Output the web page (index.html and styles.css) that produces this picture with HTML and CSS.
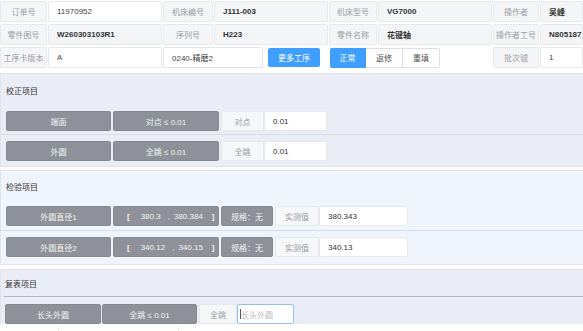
FILE: index.html
```html
<!DOCTYPE html>
<html lang="zh">
<head>
<meta charset="utf-8">
<title>工序</title>
<link rel="stylesheet" href="styles.css">
</head>
<body>
<div class="page">
  <div class="info">
    <div class="lbl">订单号</div>
    <div class="val val-input">11970952</div>
    <div class="lbl">机床编号</div>
    <div class="val val-bold">J111-003</div>
    <div class="lbl">机床型号</div>
    <div class="val val-bold">VG7000</div>
    <div class="lbl">操作者</div>
    <div class="val val-bold">吴峰</div>

    <div class="lbl">零件图号</div>
    <div class="val val-bold">W260303103R1</div>
    <div class="lbl">序列号</div>
    <div class="val val-bold">H223</div>
    <div class="lbl">零件名称</div>
    <div class="val val-bold">花键轴</div>
    <div class="lbl">操作者工号</div>
    <div class="val val-bold">N805187</div>

    <div class="lbl">工序卡版本</div>
    <div class="val val-input">A</div>
    <div class="ops">
      <div class="op-input">0240-精磨2</div>
      <div class="btn-primary">更多工序</div>
    </div>
    <div class="btn-group">
      <div class="bg-item bg-active">正常</div>
      <div class="bg-item">返修</div>
      <div class="bg-item">重填</div>
    </div>
    <div class="lbl">批次號</div>
    <div class="val val-input">1</div>
  </div>

  <section class="sec sec-a">
    <div class="sec-title">校正项目</div>
    <div class="row">
      <div class="cell dark w-name">端面</div>
      <div class="cell dark w-spec">对点 ≤ 0.01</div>
      <div class="cell light w-lbl">对点</div>
      <div class="cell value w-val">0.01</div>
    </div>
    <div class="row row-last">
      <div class="cell dark w-name">外圆</div>
      <div class="cell dark w-spec">全跳 ≤ 0.01</div>
      <div class="cell light w-lbl">全跳</div>
      <div class="cell value w-val">0.01</div>
    </div>
  </section>

  <section class="sec sec-b">
    <div class="sec-title">检验项目</div>
    <div class="row">
      <div class="cell dark w-name">外圆直径1</div>
      <div class="cell dark w-spec range"><span>[</span><span>380.3</span><span>,</span><span>380.384</span><span>]</span></div>
      <div class="cell dark w-rule">规格：无</div>
      <div class="cell light w-lbl2">实测值</div>
      <div class="cell value w-val2">380.343</div>
    </div>
    <div class="row row-last">
      <div class="cell dark w-name">外圆直径2</div>
      <div class="cell dark w-spec range"><span>[</span><span>340.12</span><span>,</span><span>340.15</span><span>]</span></div>
      <div class="cell dark w-rule">规格：无</div>
      <div class="cell light w-lbl2">实测值</div>
      <div class="cell value w-val2">340.13</div>
    </div>
  </section>

  <section class="sec sec-c">
    <div class="sec-title sec-title-line">复表项目</div>
    <div class="row row-c">
      <div class="cell dark w-name3">长头外圆</div>
      <div class="cell dark w-spec3">全跳 ≤ 0.01</div>
      <div class="cell light w-lbl3">全跳</div>
      <div class="cell input-focus w-val3"><span class="caret"></span><span class="ph">长头外圆</span></div>
    </div>
  </section>

  <div class="table-head">
    <div class="th th1"></div>
    <div class="th th2"></div>
    <div class="th th3"></div>
  </div>
</div>
</body>
</html>
```

FILE: styles.css
```css
* { box-sizing: border-box; }

html, body {
  margin: 0;
  padding: 0;
  background: #ffffff;
}

body {
  font-family: "Liberation Sans", "Noto Sans CJK SC", sans-serif;
  font-size: 8px;
  color: #333333;
  overflow: hidden;
}

.page {
  width: 583px;
  padding-top: 1px;
}

/* ---------- header info grid ---------- */
.info {
  display: grid;
  grid-template-columns: 47px 114px 50px 114px 48px 114px 46px 1fr;
  grid-template-rows: 21px 21px 21px;
  column-gap: 1px;
  row-gap: 2px;
}

.lbl {
  display: flex;
  align-items: center;
  justify-content: center;
  background: #f4f5f7;
  border: 1px solid #e6e8ec;
  border-radius: 2px;
  color: #9a9ca2;
  white-space: nowrap;
}

.val {
  display: flex;
  align-items: center;
  padding-left: 8px;
  border: 1px solid #e6e8ec;
  border-radius: 2px;
  white-space: nowrap;
  overflow: hidden;
}

.val-input {
  background: #ffffff;
  color: #444;
}

.val-bold {
  background: #f4f5f7;
  font-weight: bold;
  color: #333;
}

.ops {
  grid-column: 3 / 5;
  display: flex;
  align-items: center;
  gap: 5px;
}

.op-input {
  width: 100px;
  height: 21px;
  display: flex;
  align-items: center;
  padding-left: 8px;
  background: #fff;
  border: 1px solid #e2e4e9;
  border-radius: 2px;
  color: #444;
  white-space: nowrap;
}

.btn-primary {
  width: 52px;
  height: 19px;
  display: flex;
  align-items: center;
  justify-content: center;
  background: #409eff;
  color: #fff;
  border-radius: 2px;
}

.btn-group {
  grid-column: 5 / 7;
  display: flex;
  align-items: center;
  padding-left: 1px;
}

.bg-item {
  width: 37px;
  height: 20px;
  display: flex;
  align-items: center;
  justify-content: center;
  background: #fff;
  border: 1px solid #dcdfe6;
  border-left: none;
  color: #555;
}

.bg-item:last-child {
  border-radius: 0 2px 2px 0;
}

.bg-active {
  width: 36px;
  background: #409eff;
  border-color: #409eff;
  color: #fff;
  border-radius: 2px 0 0 2px;
}

/* ---------- sections ---------- */
.sec {
  border: 1px solid #e0e3e9;
  border-right: none;
  padding-left: 5px;
}

.sec-a { background: #eaedf5; margin-top: 5px; padding-bottom: 1px; }
.sec-b { background: #f0f4fc; margin-top: 3px; padding-bottom: 1px; }
.sec-c { background: #eaedf5; margin-top: 4px; padding-left: 3px; padding-bottom: 0; border-bottom: none; }

.sec-title {
  height: 31px;
  display: flex;
  align-items: center;
  padding-top: 1px;
  color: #333;
}

.sec-b .sec-title { height: 29px; }

.sec-title-line {
  height: 27px;
  border-bottom: 1px solid #b3b6bc;
  padding-left: 1px;
}

.row {
  display: flex;
  gap: 2px;
  padding: 6px 0 3px;
  border-bottom: 1px solid #d9dce2;
  margin-left: -5px;
  padding-left: 5px;
}

.sec-b .row { padding-bottom: 4px; }

.row-last {
  border-bottom: none;
  padding-bottom: 4px;
}

.sec-b .row-last { padding-bottom: 6px; }

.row-c {
  margin-left: 0;
  padding: 7px 0 0 1px;
  border-bottom: none;
}

.cell {
  height: 20px;
  display: flex;
  align-items: center;
  justify-content: center;
  white-space: nowrap;
  border-radius: 2px;
}

.dark {
  background: #8e9199;
  color: #f2f3f5;
  border: 1px solid #868990;
}

.light {
  background: #f6f7f9;
  color: #999ba1;
  border: 1px solid #e6e8ec;
}

.value {
  background: #ffffff;
  justify-content: flex-start;
  padding-left: 8px;
  color: #333;
  border: 1px solid #e6e8ec;
}

.sec-a .light { margin-right: -2px; border-radius: 2px 0 0 2px; }
.sec-b .light { margin-right: -2px; border-radius: 2px 0 0 2px; }

.w-name { width: 105px; }
.w-spec { width: 106px; }
.w-lbl { width: 43px; }
.w-val { width: 63px; }
.w-rule { width: 52px; }
.w-lbl2 { width: 44px; }
.w-val2 { width: 89px; }

.range {
  justify-content: flex-start;
  padding-left: 13px;
}

.range span:nth-child(1) { font-weight: bold; margin-right: 11px; }
.range span:nth-child(3) { margin: 0 4px 0 7px; }
.range span:nth-child(5) { font-weight: bold; margin-left: 9px; }

.w-name3 { width: 96px; }
.w-spec3 { width: 95px; margin-left: -1px; }
.w-lbl3 { width: 38px; margin-right: -2px; border-radius: 2px 0 0 2px; }
.w-val3 { width: 57px; }

.input-focus {
  background: #fff;
  border: 1px solid #8fc1f7;
  justify-content: flex-start;
  padding-left: 2px;
}

.caret {
  width: 1px;
  height: 10px;
  background: #555;
}

.ph { color: #b8bcc4; }

/* ---------- table header stub ---------- */
.table-head {
  display: flex;
  height: 6px;
  background: #fff;
  padding-top: 3px;
}

.th { height: 3px; }
.th1 { width: 59px; border-right: 1px solid #d5d7db; }
.th2 { width: 120px; border-right: 1px solid #d5d7db; }
.th3 { flex: 1; }
```
